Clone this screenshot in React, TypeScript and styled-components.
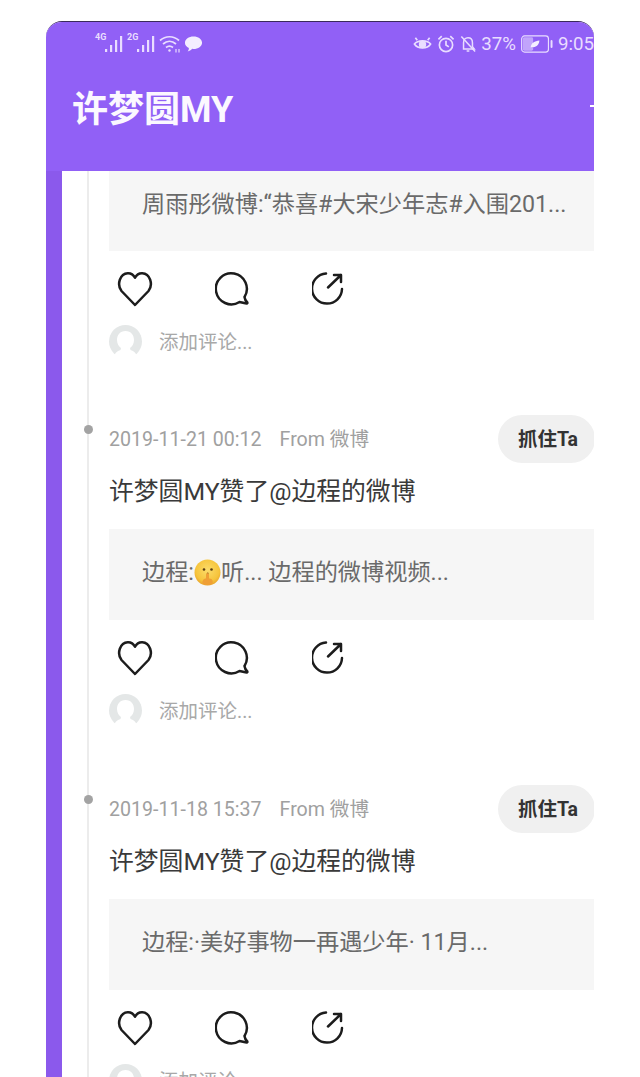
import React from 'react';
import styled, { createGlobalStyle } from 'styled-components';

const GlobalStyle = createGlobalStyle`
  html, body {
    margin: 0;
    height: 1077px;
    overflow: hidden;
    background: #fff;
  }
`;

const Phone = styled.div`
  box-sizing: border-box;
  width: 548px;
  height: 1056px;
  margin: 21px 0 0 46px;
  display: flex;
  flex-direction: column;
  overflow: hidden;
  border-radius: 16px 16px 0 0;
  border-top: 1px solid #3a2a5c;
  background: #fff;
  font-family: Roboto, 'Noto Sans CJK SC', sans-serif;
`;

const Header = styled.header`
  flex: 0 0 149px;
  background: #9160f6;
  display: flex;
  flex-direction: column;
`;

const StatusBar = styled.div`
  height: 44px;
  padding-left: 49px;
  display: flex;
  align-items: center;
  justify-content: space-between;
  color: #e9ddff;
`;

const StatusGroup = styled.div<{ $gap?: number }>`
  display: flex;
  align-items: center;
  gap: ${(p) => p.$gap ?? 0}px;
`;

const StatusText = styled.span`
  font-size: 18.7px;
  line-height: 24px;
  white-space: nowrap;
`;

const NetLabel = styled.span`
  width: 10px;
  font-size: 9px;
  font-weight: 700;
  line-height: 10px;
  align-self: flex-start;
  margin-top: -2px;
`;

const TitleRow = styled.div`
  flex: 1;
  display: flex;
  align-items: center;
  justify-content: space-between;
  padding: 0 0 18px 26px;
`;

const Title = styled.h1`
  margin: 0;
  font-size: 36px;
  line-height: 44px;
  font-weight: 700;
  color: #fbf8ff;
`;

const CutOffAction = styled.span`
  width: 4px;
  height: 14px;
  overflow: hidden;
  display: block;
`;

const Body = styled.main`
  flex: 1;
  display: flex;
  min-height: 0;
`;

const Strip = styled.div`
  flex: 0 0 16px;
  background: #8b59ec;
`;

const Feed = styled.div`
  flex: 1;
  margin-left: 25px;
  border-left: 2px solid #ececec;
  min-width: 0;
`;

const Post = styled.article`
  position: relative;
  padding: 0 0 58px 20px;

  &:first-child {
    padding-bottom: 57px;
  }
`;

const Dot = styled.span`
  position: absolute;
  left: -5px;
  top: 10px;
  width: 9px;
  height: 9px;
  border-radius: 50%;
  background: #a3a3a3;
`;

const MetaRow = styled.div`
  height: 48px;
  display: flex;
  align-items: center;
  justify-content: space-between;
`;

const Meta = styled.span`
  padding-bottom: 3px;
  font-size: 19.6px;
  color: #a0a0a0;
`;

const FromLabel = styled.span`
  margin-left: 18px;
`;

const GrabButton = styled.button`
  width: 97px;
  height: 48px;
  margin-right: -1px;
  padding: 0 0 3px 3px;
  border: 0;
  border-radius: 24px;
  background: #f0f0f0;
  color: #333;
  font-family: inherit;
  font-size: 19.5px;
  font-weight: 700;
`;

const PostTitle = styled.div`
  margin-top: 11px;
  font-size: 24.8px;
  line-height: 36px;
  color: #3a3a3a;
`;

const Quote = styled.div<{ $scrolled?: boolean }>`
  box-sizing: border-box;
  height: ${(p) => (p.$scrolled ? 80 : 91)}px;
  margin-top: ${(p) => (p.$scrolled ? 0 : 19)}px;
  padding: ${(p) => (p.$scrolled ? 15 : 25)}px 0 0 33px;
  background: #f6f6f6;
  color: #6a6a6a;
  font-size: 23.2px;
  line-height: 36px;
  white-space: nowrap;
`;

const EmojiIcon = styled.svg`
  width: 27px;
  height: 27px;
  vertical-align: -6px;
`;

const Actions = styled.div`
  height: 36px;
  margin-top: 20px;
  padding-left: 8px;
  display: flex;
  align-items: center;
  gap: 61.5px;
`;

const ActionIcon = styled.svg`
  width: 36px;
  height: 36px;
  fill: none;
  stroke: #1c1c1c;
  stroke-width: 2.5;
  stroke-linecap: round;
  stroke-linejoin: round;
`;

const CommentRow = styled.div`
  margin-top: 18px;
  height: 33px;
  display: flex;
  align-items: center;
  gap: 17px;
`;

const CommentHint = styled.span`
  padding-bottom: 2px;
  font-size: 19.5px;
  color: #a8a8a8;
`;

const Signal = () => (
  <svg width="18" height="20" viewBox="0 0 18 20">
    <g fill="currentColor">
      <rect x="0" y="15" width="2.2" height="3" />
      <rect x="5" y="11" width="2.2" height="7" />
      <rect x="10" y="6" width="2.2" height="12" />
      <rect x="15" y="2" width="2.2" height="16" />
    </g>
  </svg>
);

const Wifi = () => (
  <svg width="21" height="20" viewBox="0 0 21 20" fill="none" stroke="currentColor" strokeWidth="1.7">
    <path d="M1 6.5 C6.5 1.5 14.5 1.5 20 6.5" />
    <path d="M4 10 C8 6.5 13 6.5 17 10" />
    <path d="M7 13.5 C9.5 11.5 11.5 11.5 14 13.5" />
    <circle cx="10.5" cy="16.5" r="1.2" fill="currentColor" stroke="none" />
    <path d="M17 15 v3.5 M20 18.5 v-3.5" strokeWidth="1.2" />
  </svg>
);

const ChatBubble = () => (
  <svg width="19" height="18" viewBox="0 0 20 18">
    <path
      fill="#f4eeff"
      d="M10 1 C15 1 19 3.8 19 7.6 C19 11.4 15 14.2 10 14.2 L8.6 14.1 C7.4 15.6 5.6 16.7 3.8 16.9 C4.8 15.7 5.2 14.5 5.1 13.2 C2.6 12 1 10 1 7.6 C1 3.8 5 1 10 1 Z"
    />
  </svg>
);

const Eye = () => (
  <svg width="19" height="20" viewBox="0 0 20 20" fill="none" stroke="currentColor" strokeWidth="1.8">
    <path d="M1.5 10 C5 5.5 15 5.5 18.5 10 C15 15.5 5 15.5 1.5 10 Z" />
    <circle cx="10" cy="10.5" r="3" fill="currentColor" />
    <path d="M2.5 3.5 L4.5 6 M17.5 3.5 L15.5 6" />
  </svg>
);

const Alarm = () => (
  <svg width="18" height="20" viewBox="0 0 19 20" fill="none" stroke="currentColor" strokeWidth="1.8">
    <circle cx="9.5" cy="11" r="7" />
    <path d="M9.5 6.5 V11 L12.5 13" />
    <path d="M1.5 5 L5 1.8 M17.5 5 L14 1.8" />
  </svg>
);

const BellOff = () => (
  <svg width="16" height="20" viewBox="0 0 18 20" fill="none" stroke="currentColor" strokeWidth="1.7">
    <path d="M4 15.5 V8.5 C4 5 6 3 9 3 C12 3 14 5 14 8.5 V13 L16 15.5 Z" />
    <path d="M7.5 17.8 H10.5" />
    <path d="M1.5 1.5 L17 18.5" />
  </svg>
);

const Battery = () => (
  <svg width="32" height="18" viewBox="0 0 33 18">
    <rect x="0.7" y="0.7" width="27.6" height="16.6" rx="3" fill="none" stroke="currentColor" strokeWidth="1.2" />
    <rect x="2" y="2" width="10.5" height="14" rx="1.5" fill="currentColor" opacity="0.55" />
    <path d="M10 12.5 C10.5 8 14 6 19 5.5 C18.5 10 16 12.8 11.5 12.2 Z" fill="#f4eeff" />
    <rect x="30.5" y="5" width="2" height="8" rx="1" fill="currentColor" />
  </svg>
);

const ShushEmoji = () => (
  <EmojiIcon viewBox="0 0 27 27">
    <defs>
      <radialGradient id="shushFace" cx="50%" cy="40%" r="60%">
        <stop offset="0%" stopColor="#fbdc6a" />
        <stop offset="75%" stopColor="#f6c43c" />
        <stop offset="100%" stopColor="#e9a52c" />
      </radialGradient>
    </defs>
    <circle cx="13.5" cy="13.5" r="13" fill="url(#shushFace)" />
    <circle cx="10" cy="10.5" r="1.3" fill="#5a3d12" />
    <circle cx="17.5" cy="10.5" r="1.3" fill="#5a3d12" />
    <circle cx="13.7" cy="14.5" r="0.9" fill="#8a5a1c" />
    <path d="M8.5 24.5 C8 20.5 10.5 19.5 12 19.5 L12 15.5 C12 13.8 15 13.8 15 15.5 L15 19.5 C17 19.5 19.5 20.5 18.5 24.5 C15.5 26.6 11.5 26.6 8.5 24.5 Z" fill="#ef9f35" />
  </EmojiIcon>
);

const Heart = () => (
  <ActionIcon viewBox="0 0 36 36">
    <path d="M18 34 L4.5 20 C-0.5 13.5 3 2.5 10.8 2.2 C14 2.1 16.5 3.8 18 6.8 C19.5 3.8 22 2.1 25.2 2.2 C33 2.5 36.5 13.5 31.5 20 Z" />
  </ActionIcon>
);

const Bubble = () => (
  <ActionIcon viewBox="1 0 36 36">
    <path d="M30.5 26 A15.5 15.5 0 1 0 25.5 31 L32.5 32.5 Q34 32.5 33 31 Q31 29.5 30.5 26 Z" />
  </ActionIcon>
);

const Share = () => (
  <ActionIcon viewBox="1 0 36 36">
    <path d="M15 2.6 A15 15 0 1 0 31 18" />
    <path d="M17 16.5 L30 4 M23 4 H30 V11" />
  </ActionIcon>
);

const Avatar = () => (
  <svg width="33" height="33" viewBox="0 0 33 33">
    <circle cx="16.5" cy="16.5" r="16.5" fill="#e4e7e7" />
    <path
      fill="#fff"
      d="M16.5 6 C22 6 25 10 25 15 C25 19 23 21.5 21 23 L21.5 25 C25 26 27.5 28 28 33 H5 C5.5 28 8 26 11.5 25 L12 23 C10 21.5 8 19 8 15 C8 10 11 6 16.5 6 Z"
    />
  </svg>
);

type PostData = {
  time: string;
  quote: React.ReactNode;
};

const posts: PostData[] = [
  {
    time: '2019-11-21 00:12',
    quote: (
      <>
        边程:
        <ShushEmoji />
        听... 边程的微博视频...
      </>
    ),
  },
  { time: '2019-11-18 15:37', quote: '边程:·美好事物一再遇少年· 11月...' },
];

const Footer = () => (
  <>
    <Actions>
      <Heart />
      <Bubble />
      <Share />
    </Actions>
    <CommentRow>
      <Avatar />
      <CommentHint>添加评论...</CommentHint>
    </CommentRow>
  </>
);

const App: React.FC = () => (
  <>
    <GlobalStyle />
    <Phone>
      <Header>
        <StatusBar>
          <StatusGroup $gap={4}>
            <StatusGroup>
              <NetLabel>4G</NetLabel>
              <Signal />
            </StatusGroup>
            <StatusGroup>
              <NetLabel>2G</NetLabel>
              <Signal />
            </StatusGroup>
            <Wifi />
            <ChatBubble />
          </StatusGroup>
          <StatusGroup $gap={5}>
            <Eye />
            <Alarm />
            <BellOff />
            <StatusGroup $gap={5}>
              <StatusText>37%</StatusText>
              <Battery />
              <StatusText>9:05</StatusText>
            </StatusGroup>
          </StatusGroup>
        </StatusBar>
        <TitleRow>
          <Title>许梦圆MY</Title>
          <CutOffAction>
            <svg width="14" height="14" viewBox="0 0 14 14" stroke="#fff" strokeWidth="2">
              <path d="M0 2 H14 M7 2 V14" />
            </svg>
          </CutOffAction>
        </TitleRow>
      </Header>
      <Body>
        <Strip />
        <Feed>
          <Post>
            <Quote $scrolled>周雨彤微博:“恭喜#大宋少年志#入围201...</Quote>
            <Footer />
          </Post>
          {posts.map((post) => (
            <Post key={post.time}>
              <Dot />
              <MetaRow>
                <Meta>
                  {post.time}
                  <FromLabel>From 微博</FromLabel>
                </Meta>
                <GrabButton>抓住Ta</GrabButton>
              </MetaRow>
              <PostTitle>许梦圆MY赞了@边程的微博</PostTitle>
              <Quote>{post.quote}</Quote>
              <Footer />
            </Post>
          ))}
        </Feed>
      </Body>
    </Phone>
  </>
);

export default App;
